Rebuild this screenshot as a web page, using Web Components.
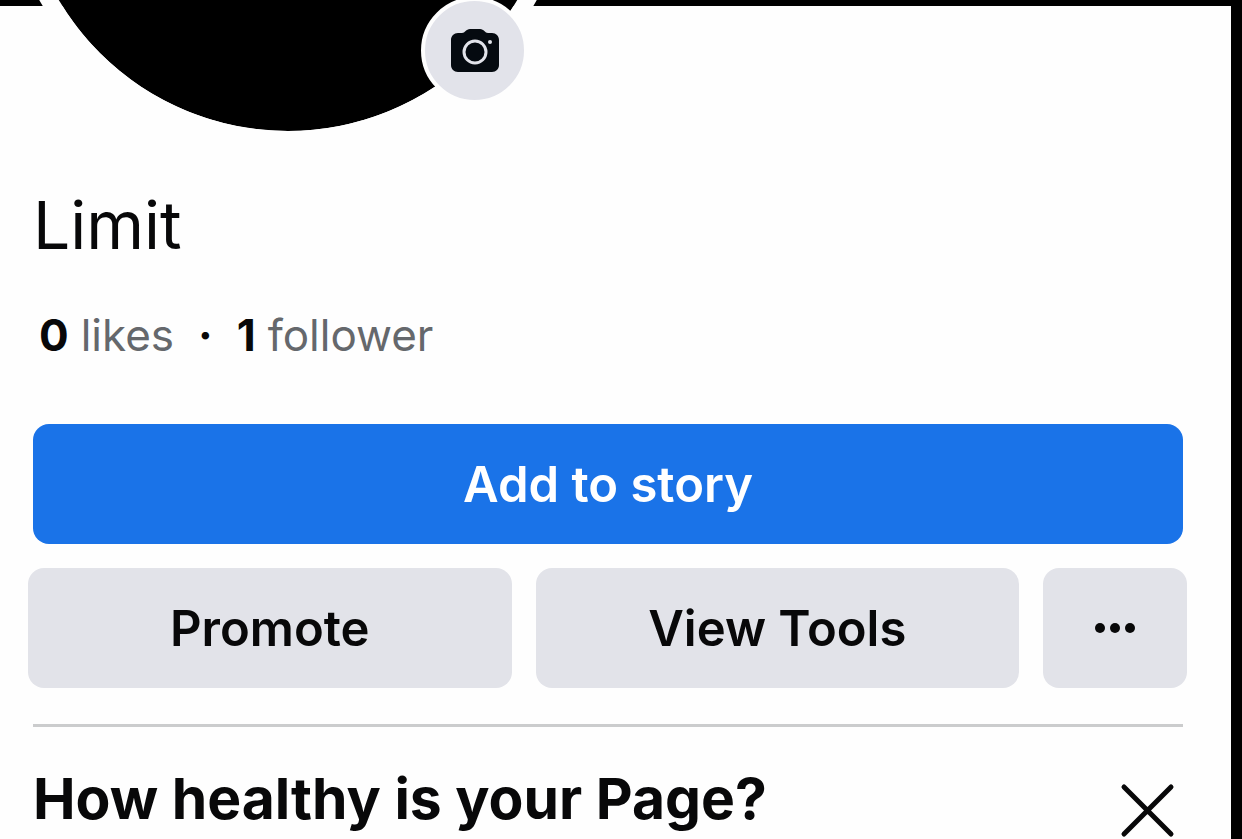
<!DOCTYPE html>
<html lang="en">
<head>
  <meta charset="utf-8">
  <meta name="viewport" content="width=device-width, initial-scale=1">
  <title>Limit</title>
  <style>
    body {
      margin: 0;
      background: #fefefe;
      color: #080809;
      font-family: Inter, "Liberation Sans", sans-serif;
    }
  </style>
</head>
<body>
  <page-frame>
    <page-cover slot="cover"></page-cover>
    <page-title>Limit</page-title>
    <page-stats>
      <stat-count value="0">likes</stat-count>
      <b>·</b>
      <stat-count value="1">follower</stat-count>
    </page-stats>
    <page-actions>
      <action-button slot="main" kind="primary">Add to story</action-button>
      <action-button>Promote</action-button>
      <action-button>View Tools</action-button>
      <action-button label="More">
        <svg width="42" height="12" viewBox="0 0 42 12" fill="#080809"><circle cx="6" cy="6" r="5"/><circle cx="21" cy="6" r="5"/><circle cx="36" cy="6" r="5"/></svg>
      </action-button>
    </page-actions>
    <health-card>How healthy is your Page?</health-card>
  </page-frame>

  <script>
    class PageFrame extends HTMLElement {
      constructor() {
        super();
        this.attachShadow({ mode: "open" });
        this.shadowRoot.innerHTML = `
      <style>
        :host {
          display: block;
          box-sizing: border-box;
          min-height: 100vh;
          border-right: 11px solid #000;
        }
        main {
          display: flex;
          flex-direction: column;
          padding: 0 44px 0 28px;
        }
      </style>
      <slot name="cover"></slot>
      <main><slot></slot></main>
    `;
      }
    }

    class PageCover extends HTMLElement {
      constructor() {
        super();
        this.attachShadow({ mode: "open" });
        this.shadowRoot.innerHTML = `
      <style>
        :host {
          display: block;
          position: relative;
          height: 148px;
          overflow: hidden;
        }
        .cover {
          height: 6px;
          background: #000;
        }
        .avatar {
          position: absolute;
          left: 5px;
          bottom: 0;
          width: 532px;
          height: 532px;
          border: 17px solid #fefefe;
          border-radius: 50%;
          background: #000;
          background-clip: padding-box;
        }
        button {
          position: absolute;
          left: 421px;
          bottom: 44px;
          display: grid;
          place-items: center;
          width: 107px;
          height: 107px;
          padding: 0;
          border: 4px solid #fefefe;
          border-radius: 50%;
          background: #e2e3ea;
        }
      </style>
      <div class="cover"></div>
      <div class="avatar"></div>
      <button type="button" aria-label="Change profile picture">
        <svg width="50" height="46" viewBox="0 0 50 46">
          <path d="M8 5h4c3 0 4-4 8-4h10c4 0 5 4 8 4h4c4 0 7 3 7 7v25c0 4-3 7-7 7H8c-4 0-7-3-7-7V12c0-4 3-7 7-7z" fill="#050a10"/>
          <circle cx="25" cy="24" r="11" fill="none" stroke="#e2e3ea" stroke-width="3"/>
          <circle cx="40" cy="14" r="2" fill="#e2e3ea"/>
        </svg>
      </button>
    `;
      }
    }

    class PageTitle extends HTMLElement {
      constructor() {
        super();
        this.attachShadow({ mode: "open" });
        this.shadowRoot.innerHTML = `
      <style>
        :host {
          display: block;
          padding: 37px 5px 0;
        }
        h1 {
          margin: 0;
          font-size: 66px;
          font-weight: 400;
          line-height: 80px;
        }
      </style>
      <h1><slot></slot></h1>
    `;
      }
    }

    class PageStats extends HTMLElement {
      constructor() {
        super();
        this.attachShadow({ mode: "open" });
        this.shadowRoot.innerHTML = `
      <style>
        :host {
          display: flex;
          gap: 24px;
          padding: 40px 11px 0;
          font-size: 44px;
          line-height: 60px;
        }
      </style>
      <slot></slot>
    `;
      }
    }

    class StatCount extends HTMLElement {
      constructor() {
        super();
        this.attachShadow({ mode: "open" });
        this.shadowRoot.innerHTML = `
      <style>
        :host {
          display: flex;
          gap: 12px;
          color: #65686c;
        }
        b {
          color: #080809;
          font-weight: 700;
        }
      </style>
      <b>${this.getAttribute("value")}</b>
      <span><slot></slot></span>
    `;
      }
    }

    class PageActions extends HTMLElement {
      constructor() {
        super();
        this.attachShadow({ mode: "open" });
        this.shadowRoot.innerHTML = `
      <style>
        :host {
          display: grid;
          gap: 24px;
          padding: 59px 0 36px;
        }
        .main {
          padding: 0 4px 0 5px;
        }
        .row {
          display: grid;
          grid-template-columns: 1fr 1fr 144px;
          gap: 24px;
        }
      </style>
      <div class="main"><slot name="main"></slot></div>
      <div class="row"><slot></slot></div>
    `;
      }
    }

    class ActionButton extends HTMLElement {
      constructor() {
        super();
        const label = this.getAttribute("label");
        this.attachShadow({ mode: "open" });
        this.shadowRoot.innerHTML = `
      <style>
        :host {
          display: block;
        }
        button {
          display: flex;
          align-items: center;
          justify-content: center;
          width: 100%;
          height: 120px;
          padding: 0;
          border: 0;
          border-radius: 16px;
          background: #e2e3e9;
          color: #080809;
          font: inherit;
          font-size: 49px;
          font-weight: 600;
        }
        :host([kind="primary"]) button {
          background: #1a73e8;
          color: #fff;
        }
      </style>
      <button type="button"${label ? ` aria-label="${label}"` : ""}><slot></slot></button>
    `;
      }
    }

    class HealthCard extends HTMLElement {
      constructor() {
        super();
        this.attachShadow({ mode: "open" });
        this.shadowRoot.innerHTML = `
      <style>
        :host {
          display: flex;
          justify-content: space-between;
          align-items: flex-start;
          margin: 0 4px 0 5px;
          border-top: 3px solid #cbcccd;
          padding-top: 36px;
        }
        h2 {
          margin: 0;
          font-size: 57px;
          font-weight: 700;
          line-height: 72px;
        }
        button {
          display: flex;
          padding: 20px 8px 0 0;
          border: 0;
          background: none;
        }
      </style>
      <h2><slot></slot></h2>
      <button type="button" aria-label="Close">
        <svg width="56" height="55" viewBox="0 0 56 55" fill="none" stroke="#080809" stroke-width="5" stroke-linecap="round"><path d="M5 4l47 47M52 4L5 51"/></svg>
      </button>
    `;
      }
    }

    customElements.define("page-frame", PageFrame);
    customElements.define("page-cover", PageCover);
    customElements.define("page-title", PageTitle);
    customElements.define("page-stats", PageStats);
    customElements.define("stat-count", StatCount);
    customElements.define("page-actions", PageActions);
    customElements.define("action-button", ActionButton);
    customElements.define("health-card", HealthCard);
  </script>
</body>
</html>
